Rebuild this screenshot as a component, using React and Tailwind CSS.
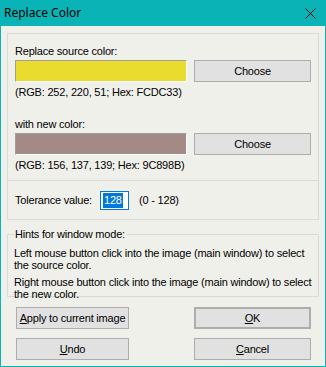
const ui = { fontFamily: '"Liberation Sans", Arial, sans-serif' };

const Btn = ({ children, className = "" }) => (
	<button
		className={`h-[22px] bg-[#e1e1e1] border border-[#adadad] text-[11px] tracking-[-0.2px] text-black flex items-center justify-center ${className}`}
	>
		{children}
	</button>
);

const Key = ({ children }) => <span className="underline underline-offset-[1px]">{children}</span>;

const ColorRow = ({ label, swatch, info }) => (
	<>
		<div className="leading-[13px]">{label}</div>
		<div className="mt-[2px] flex gap-[7px]">
			<div className={`w-[172px] h-[22px] border-t border-l border-[#a0a0a0] border-r-white border-b-white border-r border-b ${swatch}`} />
			<Btn className="w-[117px]">Choose</Btn>
		</div>
		<div className="mt-[4px] leading-[13px]">{info}</div>
	</>
);

export default function App() {
	return (
		<div
			className="w-[326px] h-[367px] bg-[#f0f0eb] border-x border-b border-[#0ab3b5] flex flex-col text-[11px] tracking-[-0.2px] text-black"
			style={ui}
		>
			{/* Title bar */}
			<div className="h-[26px] shrink-0 bg-[#0ab3b5] flex items-center justify-between pl-[3px]">
				<span className="text-[12px] tracking-normal" style={{ fontFamily: '"Noto Sans", "Open Sans", sans-serif' }}>
					Replace Color
				</span>
				<svg width="11" height="11" viewBox="0 0 11 11" className="mr-[9px]">
					<path d="M0.5 0.5 L10.5 10.5 M10.5 0.5 L0.5 10.5" stroke="#000" strokeWidth="1" />
				</svg>
			</div>

			<div className="px-[6px] pt-[7px] flex flex-col">
				{/* Colors */}
				<div className="border border-[#dadada] pl-[7px] pr-[6px] pt-[11px] pb-[8px]">
					<ColorRow
						label="Replace source color:"
						swatch="bg-[#eadc2f]"
						info="(RGB: 252, 220, 51; Hex: FCDC33)"
					/>
					<div className="mt-[19px]" />
					<ColorRow
						label="with new color:"
						swatch="bg-[#a38a86]"
						info="(RGB: 156, 137, 139; Hex: 9C898B)"
					/>
				</div>

				{/* Tolerance */}
				<div className="h-[39px] border-x border-b border-[#dadada] pl-[7px] flex items-center">
					<span className="w-[85px]">Tolerance value:</span>
					<div className="w-[29px] h-[19px] bg-white border border-[#0078d7] flex items-center pl-[2px]">
						<span className="bg-[#0078d7] text-white leading-[15px] px-[1px]">128</span>
					</div>
					<span className="ml-[10px]">(0 - 128)</span>
				</div>

				{/* Hints */}
				<fieldset className="mt-[8px] h-[69px] border border-[#dadada] pl-[6px] pr-[6px]">
					<legend className="px-[1px] leading-[13px]">Hints for window mode:</legend>
					<p className="pt-[6px] leading-[12px]">
						Left mouse button click into the image (main window) to select the source color.
					</p>
					<p className="mt-[5px] leading-[12px]">
						Right mouse button click into the image (main window) to select the new color.
					</p>
				</fieldset>

				{/* Buttons */}
				<div className="mt-[10px] pl-[9px] pr-[8px] flex flex-col gap-[9px]">
					<div className="flex justify-between">
						<Btn className="w-[113px]">
							<span>
								<Key>A</Key>pply to current image
							</span>
						</Btn>
						<Btn className="w-[117px] border-2 border-[#0078d7]">
							<span>
								<Key>O</Key>K
							</span>
						</Btn>
					</div>
					<div className="flex justify-between">
						<Btn className="w-[113px]">
							<span>
								<Key>U</Key>ndo
							</span>
						</Btn>
						<Btn className="w-[117px]">
							<span>
								<Key>C</Key>ancel
							</span>
						</Btn>
					</div>
				</div>
			</div>
		</div>
	);
}
